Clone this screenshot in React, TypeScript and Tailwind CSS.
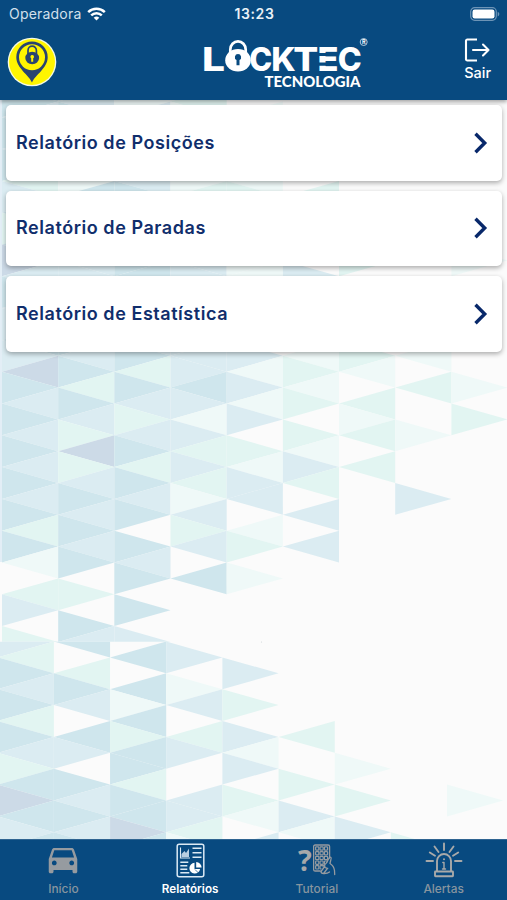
import React from "react";

const TONES: Record<string, string> = {
  B: "#cfe6ed",
  L: "#dbecf2",
  M: "#e2f5f2",
  P: "#eff9f8",
  V: "#ccdae7",
};

// Each string is one column of interlocking triangles, listed from top to bottom.
type Tile = { x: number; y: number; first: number; columns: string[] };

const UPPER: Tile = {
  x: 2,
  y: 371.7,
  first: -18,
  columns: [
    "BBLBLBMLBMBVLBLLBLVBLBLBLBLBMBPWMLWM",
    "LLBLBLPBLBLLLBLLBLBMBLMVMLBLBLBWMWBL",
    "PPLMLBLBLBLBBLBLLBMBLMLBMBLBWBLBWBWL",
    "PMPPMPPMPLMLLMLPLLLBLPLMLMPLMLWBWWWW",
    "WWPWPWPMWPMPPWPWWLPLPLWMPLLWPMWPWWWW",
    "WWWWWWWMWWWWLWWWWPMPMWMPLMWLWLWWWWWW",
    "WWWWWWWWWWWMWWWWWMPWMPMWMWWWWWWWWWWW",
    "WWWWWWWWWWWWWWWWWPWMWWPWWWLWWWWWWWWW",
    "WWWWWWWWWWWPWWWWWWWPWMWWWWWWWWWWWWWW",
  ],
};

const LOWER: Tile = {
  x: -2.3,
  y: 657.4,
  first: -1,
  columns: [
    "LMBLBMBLMBVBLB",
    "BWMBLWBLWBLBLB",
    "WBWBPBMBBMBBVB",
    "WLWPLWMLWWLLMP",
    "WWLWMWLPLWMPWL",
    "WWWWWWMWWMWLPW",
    "WWWWWWWWPWMWLW",
    "WWWWWWWWWWWWWM",
    "WWWWWWWWWWPWWW",
  ],
};

const STEP_X = 56.17;
const HALF = 15.9;

function Triangles({ tile }: { tile: Tile }) {
  return (
    <>
      {tile.columns.flatMap((column, i) =>
        column.split("").map((tone, n) => {
          if (tone === "W") return null;
          const j = n + tile.first;
          const left = tile.x + i * STEP_X;
          const right = left + STEP_X;
          const y = tile.y + j * HALF;
          const pointsLeft = (i + j) % 2 === 0;
          const tip = pointsLeft ? left : right;
          const base = pointsLeft ? right : left;
          return (
            <polygon
              key={`${i}-${n}`}
              points={`${tip},${y} ${base},${y - HALF} ${base},${y + HALF}`}
              fill={TONES[tone]}
            />
          );
        }),
      )}
    </>
  );
}

function Backdrop() {
  return (
    <svg className="absolute inset-0" width="507" height="900" viewBox="0 0 507 900" aria-hidden="true">
      <defs>
        <clipPath id="upper"><rect x="0" y="90" width="507" height="551.8" /></clipPath>
        <clipPath id="lower"><rect x="0" y="641.8" width="507" height="200" /></clipPath>
      </defs>
      <rect width="507" height="900" fill="#fbfbfb" />
      <g clipPath="url(#upper)">
        <rect x="0" y="90" width="2" height="472" fill="#e3eef6" />
        <Triangles tile={UPPER} />
      </g>
      <g clipPath="url(#lower)"><Triangles tile={LOWER} /></g>
      <circle cx="261.5" cy="642" r="0.6" fill="#cfd6d9" />
    </svg>
  );
}

function StatusBar() {
  return (
    <div className="grid h-7 grid-cols-3 items-center pl-[9px] pr-[7px] text-white">
      <div className="flex items-center gap-[6px]">
        <span className="text-[14px] leading-none tracking-[0.2px] text-[#d3e0ec]">Operadora</span>
        <svg width="19" height="14" viewBox="0 0 19 14" fill="none" stroke="#fff" strokeWidth="2.5">
          <path d="M1.2 5.1a11.9 11.9 0 0 1 16.6 0" />
          <path d="M4.2 8.3a7.6 7.6 0 0 1 10.6 0" />
          <path d="M9.5 13.6 6.7 10.8a4 4 0 0 1 5.6 0Z" fill="#fff" stroke="none" />
        </svg>
      </div>
      <span className="text-center text-[14px] font-semibold leading-none tracking-[0.6px] text-[#e9f1f7]">13:23</span>
      <svg className="justify-self-end" width="30" height="14" viewBox="0 0 30 14">
        <rect x="0.7" y="0.7" width="25.6" height="12.6" rx="4" fill="none" stroke="#6d94b6" strokeWidth="1.2" />
        <rect x="2.5" y="2.5" width="22" height="9" rx="2.2" fill="#fff" />
        <path d="M27.7 4.8v4.6c1-.4 1.6-1.3 1.6-2.3s-.6-1.9-1.6-2.3Z" fill="#6d94b6" />
      </svg>
    </div>
  );
}

function PinBadge() {
  return (
    <svg width="50" height="50" viewBox="0 0 50 50">
      <circle cx="25" cy="25" r="24.3" fill="#f4f9e4" />
      <circle cx="25" cy="25" r="23" fill="#fff500" />
      <path d="M25 45.5C22 38 9.3 31 9.3 20.2a15.7 15.7 0 0 1 31.4 0C40.7 31 28 38 25 45.5Z" fill="#294470" />
      <circle cx="25" cy="20.3" r="13" fill="#fff500" />
      <path d="M21 17v-3.6a4.2 4.2 0 0 1 8.4 0V17" fill="none" stroke="#294470" strokeWidth="1.7" />
      <ellipse cx="25.2" cy="21" rx="6.9" ry="6.2" fill="#294470" />
      <path d="M25.2 18a1.8 1.8 0 0 1 1 3.3v3.5h-2v-3.5a1.8 1.8 0 0 1 1-3.3Z" fill="#fff500" />
    </svg>
  );
}

const LETTERS: [string, number, number][] = [
  ["L", 202, 23],
  ["C", 249.3, 23],
  ["K", 271.2, 24.5],
  ["T", 293.3, 25],
  ["E", 317.5, 21],
  ["C", 337.8, 24],
];

function Logo() {
  return (
    <svg width="168" height="56" viewBox="201 36 168 56" fill="#fff" role="img" aria-label="Locktec Tecnologia">
      <g className="text-[33px] font-extrabold">
        {LETTERS.map(([letter, x, width]) => (
          <text key={x} x={x} y="71.4" textLength={width} lengthAdjust="spacingAndGlyphs">{letter}</text>
        ))}
      </g>
      <path d="M317 54.5h21M317 64.200h21" stroke="#084a80" strokeWidth="3.2" />
      <path d="M230.3 53v-3.5a7.700 8.200 0 0 1 15.4 0V53" fill="none" stroke="#fff" strokeWidth="2.7" />
      <ellipse cx="238" cy="60.3" rx="12.8" ry="11.300" />
      <path d="M238 54a3.200 3.200 0 0 1 1.500 6v5.300h-3V60a3.200 3.200 0 0 1 1.500-6Z" fill="#084a80" />
      <text x="264.5" y="87.300" textLength="96" lengthAdjust="spacingAndGlyphs" className="font-[Lato] text-[14.7px] font-black">TECNOLOGIA</text>
      <circle cx="363.7" cy="42" r="3.500" fill="none" stroke="#c8d9e7" strokeWidth="0.9" />
      <text x="361.9" y="44" className="text-[5.5px] font-bold">R</text>
    </svg>
  );
}

function Header() {
  return (
    <header className="relative h-[99.5px] bg-[#084a80] text-white shadow-[0_2px_4px_rgba(0,0,0,0.35)]">
      <StatusBar />
      <div className="flex h-[71px] items-start pl-[7px] pr-4">
        <div className="w-[194px] pt-[9px]"><PinBadge /></div>
        <div className="pt-2"><Logo /></div>
        <button className="flex flex-1 flex-col items-end pt-[10px]">
          <svg width="27" height="24" viewBox="0 0 27 24" fill="none" stroke="#fff" strokeWidth="2.1" strokeLinecap="round" strokeLinejoin="round">
            <path d="M13 1.500H3.300A1.300 1.300 0 0 0 2 2.800v18.400a1.300 1.300 0 0 0 1.300 1.300H13" strokeLinecap="butt" />
            <path d="M9 12h15.500M19 6.500l5.500 5.500-5.500 5.500" />
          </svg>
          <span className="mt-[3px] text-[14.5px] font-medium leading-4">Sair</span>
        </button>
      </div>
    </header>
  );
}

function ReportCard({ label }: { label: string }) {
  return (
    <button className="flex h-[75.5px] shrink-0 items-center justify-between rounded-[5px] bg-white pl-[10px] pr-[14px] text-left shadow-[0_2px_5px_rgba(0,0,0,0.32)]">
      <span className="text-[18px] font-semibold leading-none tracking-[0.55px] text-[#102e6c]">{label}</span>
      <svg width="15" height="22" viewBox="0 0 15 22" fill="none" stroke="#08286a" strokeWidth="3.4">
        <path d="M2.500 1.800 11.700 11l-9.200 9.200" />
      </svg>
    </button>
  );
}

function CarIcon() {
  return (
    <svg width="38" height="38" viewBox="0 0 24 24" fill="#969ba0">
      <path d="M18.920 6.010C18.720 5.420 18.160 5 17.500 5h-11c-.66 0-1.210.42-1.420 1.010L3 12v8c0 .55.45 1 1 1h1c.55 0 1-.45 1-1v-1h12v1c0 .55.45 1 1 1h1c.55 0 1-.45 1-1v-8l-2.080-5.990zM6.500 16c-.83 0-1.500-.67-1.500-1.500S5.670 13 6.500 13s1.500.67 1.500 1.500S7.330 16 6.500 16zm11 0c-.83 0-1.500-.67-1.500-1.500s.67-1.500 1.500-1.500 1.500.67 1.500 1.500-.67 1.500-1.500 1.500zM5 11l1.500-4.500h11L19 11H5z" />
    </svg>
  );
}

function ReportIcon() {
  return (
    <svg width="29" height="35" viewBox="0 0 29 35" fill="none" stroke="#dbe9f4">
      <rect x="1.2" y="1.2" width="26.6" height="32.6" rx="2" strokeWidth="1.5" />
      <path d="M4.500 4.500V15H14" strokeWidth="1.1" />
      <path d="M5.500 14V11l3-3 1.500 2 3-4.500V14Z" fill="#b9cfe2" stroke="none" />
      <path d="M16.500 5.300h9M16.500 9.700h9M16.500 14.200h9M4.300 19.300h8M4.300 22.800h7M4.300 26.300h7M4.300 29.800h9" strokeWidth="1.5" />
      <path d="M18.500 19.800a5.400 5.400 0 1 0 5.600 6.300h-5.600Z" fill="#fff" stroke="none" />
      <path d="M20.200 19a5.500 5.500 0 0 1 5.400 5.500h-5.400Z" fill="#fff" stroke="none" />
      <path d="m19 26.500 3.500 3.500" strokeWidth=".7" stroke="#084a80" />
    </svg>
  );
}

function TutorialIcon() {
  const keys = [0, 1, 2, 3, 4].flatMap((row) => [0, 1, 2].map((col) => ({ row, col })));
  return (
    <span className="flex items-center">
      <span className="w-[15px] text-left font-['Open_Sans'] text-[29px] font-bold leading-[40px] text-[#a6a8aa]">?</span>
      <svg width="23" height="32" viewBox="15 0 23 32" fill="none" stroke="#969ba0">
        <rect x="15.6" y="1" width="16" height="26" rx="1.5" strokeWidth="1.3" />
        {keys.map(({ row, col }) => (
          <rect key={`${row}-${col}`} x={17.600 + col * 4.400} y={2.900 + row * 4.700} width="3.2" height="3.3" rx=".7" strokeWidth="1.2" />
        ))}
        <path d="M22.500 26.800 26 20.500l3-1.500 3.500-6c1.400.3 1.400 1.300 1 2.500l-1.500 4 3.500 4 2 6.500H26.500Z" fill="#084a80" stroke="none" />
        <path d="m23 27.500 4-5.500M25.500 29.500l4-5c-2-.5-3.500-1.500-4.500-3 2.500-.4 4-3 5.500-6.500.8-1.700 1.700-2.200 2.500-1.500.7.600-.7 3.500-1 6 2.500 1.500 4 3.500 4.500 7l.2 4M23 27.500c0 1.200 1 2 2.500 2 2.500.1 4.500-.2 6-1.500" strokeWidth="1.3" strokeLinecap="round" />
      </svg>
    </span>
  );
}

function AlertIcon() {
  return (
    <svg width="38" height="36" viewBox="0 0 38 36" fill="none" stroke="#a8a9a9" strokeWidth="1.9" strokeLinecap="round">
      <path d="M19 1.500V8M9.500 4.500l4 5.500M28.500 4.500l-4 5.500M4.800 10.500l5.200 3.300M33.200 10.500 28 13.800M1.500 19h6.500M30 19h6.500" />
      <path d="M12 29V19a7 7 0 0 1 14 0v10" />
      <rect x="10" y="29.5" width="18" height="4.8" rx=".5" />
      <path d="M19 20.500v6.500M17.800 20.500H19M17.500 27h3" strokeWidth="1.4" />
      <circle cx="19" cy="17.3" r="1" fill="#a8a9a9" stroke="none" />
    </svg>
  );
}

function Tab({ label, icon, active = false }: { label: string; icon: React.ReactNode; active?: boolean }) {
  return (
    <button className="flex flex-1 flex-col items-center">
      <span className="flex h-[42px] items-center justify-center pb-[1px]">{icon}</span>
      <span className={active ? "text-[11.7px] font-semibold leading-[14px] text-white" : "text-[11.9px] leading-[14px] font-medium text-[#87959f]"}>
        {label}
      </span>
    </button>
  );
}

export default function App() {
  return (
    <div className="relative flex h-[900px] w-[507px] flex-col overflow-hidden font-['Inter','Liberation_Sans',sans-serif]">
      <Backdrop />
      <Header />
      <main className="relative flex flex-1 flex-col gap-[10px] pl-[6px] pr-[5px] pt-[5.5px]">
        <ReportCard label="Relatório de Posições" />
        <ReportCard label="Relatório de Paradas" />
        <ReportCard label="Relatório de Estatística" />
      </main>
      <nav className="relative flex h-[61.5px] border-t border-[#2f6491] bg-[#084a80]">
        <Tab label="Início" icon={<span className="pb-[3px]"><CarIcon /></span>} />
        <Tab label="Relatórios" icon={<ReportIcon />} active />
        <Tab label="Tutorial" icon={<TutorialIcon />} />
        <Tab label="Alertas" icon={<AlertIcon />} />
      </nav>
    </div>
  );
}
